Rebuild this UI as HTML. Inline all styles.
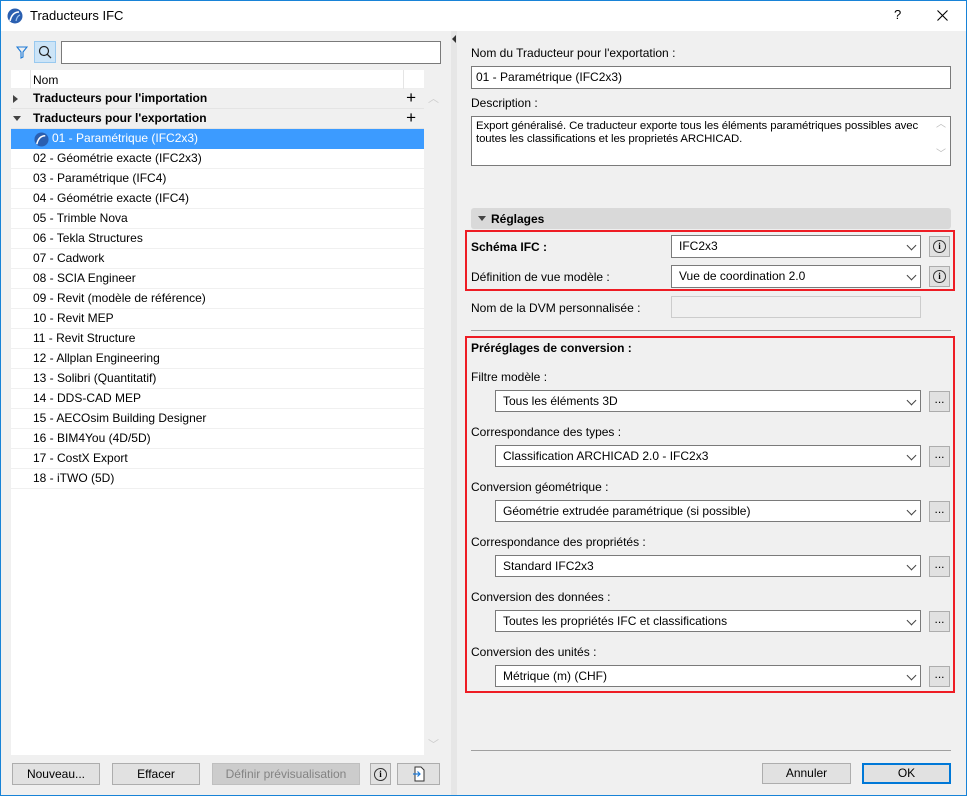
<!DOCTYPE html>
<html><head><meta charset="utf-8"><style>
*{box-sizing:border-box;margin:0;padding:0}
body{width:967px;height:796px;background:#f0f0f0;font-family:"Liberation Sans",sans-serif;font-size:12px;color:#000;position:relative;overflow:hidden}
.a{position:absolute}
.win{left:0;top:0;width:967px;height:796px;border:1px solid #1883d7}
.tb{left:1px;top:1px;width:965px;height:30px;background:#fff}
.row{position:absolute;left:11px;width:413px;height:20px;background:#fff;border-bottom:1px solid #f0f0f0;line-height:19px;padding-left:22px;white-space:nowrap}
.grp{background:#f0f0f0;font-weight:bold;border-bottom:1px solid #e4e4e4}
.inp{position:absolute;background:#fff;border:1px solid #7a7a7a;height:22px;line-height:20px;padding-left:6px;white-space:nowrap}
.dd{position:absolute;background:#fff;border:1px solid #7a7a7a;height:22px;line-height:20px;padding-left:7px;white-space:nowrap}
.dd::after{content:"";position:absolute;right:5px;top:6px;width:6px;height:6px;border-right:1px solid #444;border-bottom:1px solid #444;transform:rotate(45deg)}
.btn{position:absolute;background:#e1e1e1;border:1px solid #adadad;height:22px;line-height:20px;text-align:center}
.lbl{position:absolute;white-space:nowrap;line-height:14px}
.red{position:absolute;border:2px solid #ee1c24}
.info{width:13px;height:13px;border:1.3px solid #333;border-radius:50%;position:absolute;left:3px;top:3px;font:bold 9px "Liberation Serif",serif;text-align:center;line-height:11px}
</style></head><body>
<div class="a win"></div>
<div class="a tb"></div>
<svg class="a" style="left:7px;top:8px" width="16" height="16" viewBox="0 0 16 16"><circle cx="8" cy="8" r="7.5" fill="#2a5fb0"/><path d="M3 13 Q5 4 12 4" stroke="#fff" stroke-width="1.6" fill="none"/><path d="M9 13 Q10 8 13 7" stroke="#9cc3ee" stroke-width="1.2" fill="none"/></svg>
<div class="lbl" style="left:30px;top:9px;font-size:13px">Traducteurs IFC</div>
<div class="lbl" style="left:894px;top:8px;font-size:13px">?</div>
<svg class="a" style="left:937px;top:10px" width="11" height="11" viewBox="0 0 11 11"><path d="M0.5 0.5L10.5 10.5M10.5 0.5L0.5 10.5" stroke="#000" stroke-width="1.1"/></svg>

<!-- left pane -->
<svg class="a" style="left:16px;top:46px" width="12" height="13" viewBox="0 0 12 13"><path d="M1 1H11L7 6V11L5 12V6Z" fill="none" stroke="#1e7ad6" stroke-width="1.1"/></svg>
<div class="a" style="left:34px;top:41px;width:22px;height:22px;background:#cce4f7;border:1px solid #99c9ef"></div>
<svg class="a" style="left:38px;top:45px" width="14" height="14" viewBox="0 0 14 14"><circle cx="6" cy="6" r="4.5" fill="none" stroke="#222" stroke-width="1.2"/><path d="M9.3 9.3L13 13" stroke="#222" stroke-width="1.3"/></svg>
<div class="inp" style="left:61px;top:41px;width:380px;height:23px"></div>

<div class="a" style="left:11px;top:70px;width:413px;height:685px;background:#fff"></div>
<div class="a" style="left:11px;top:70px;width:413px;height:19px;background:#fff;border-bottom:1px solid #eee"></div>
<div class="a" style="left:30px;top:70px;width:1px;height:19px;background:#e5e5e5"></div>
<div class="a" style="left:403px;top:70px;width:1px;height:19px;background:#e5e5e5"></div>
<div class="lbl" style="left:33px;top:73px">Nom</div>
<div class="row grp" style="top:89px">Traducteurs pour l'importation<span class="a" style="right:8px;top:-1px;font-weight:normal;font-size:17px">+</span></div>
<div class="row grp" style="top:109px">Traducteurs pour l'exportation<span class="a" style="right:8px;top:-1px;font-weight:normal;font-size:17px">+</span></div>
<div class="a" style="left:13px;top:95px;width:0;height:0;border-left:5px solid #444;border-top:4px solid transparent;border-bottom:4px solid transparent"></div>
<div class="a" style="left:13px;top:116px;width:0;height:0;border-top:5px solid #444;border-left:4px solid transparent;border-right:4px solid transparent"></div>
<div class="row" style="top:129px;background:#3c9bff;color:#fff;padding-left:41px;border:none">01 - Paramétrique (IFC2x3)</div>
<svg class="a" style="left:34px;top:132px" width="15" height="15" viewBox="0 0 16 16"><circle cx="8" cy="8" r="7.5" fill="#2a5fb0"/><path d="M3 13 Q5 4 12 4" stroke="#fff" stroke-width="1.6" fill="none"/></svg>
<div class="row" style="top:149px">02 - Géométrie exacte (IFC2x3)</div>
<div class="row" style="top:169px">03 - Paramétrique (IFC4)</div>
<div class="row" style="top:189px">04 - Géométrie exacte (IFC4)</div>
<div class="row" style="top:209px">05 - Trimble Nova</div>
<div class="row" style="top:229px">06 - Tekla Structures</div>
<div class="row" style="top:249px">07 - Cadwork</div>
<div class="row" style="top:269px">08 - SCIA Engineer</div>
<div class="row" style="top:289px">09 - Revit (modèle de référence)</div>
<div class="row" style="top:309px">10 - Revit MEP</div>
<div class="row" style="top:329px">11 - Revit Structure</div>
<div class="row" style="top:349px">12 - Allplan Engineering</div>
<div class="row" style="top:369px">13 - Solibri (Quantitatif)</div>
<div class="row" style="top:389px">14 - DDS-CAD MEP</div>
<div class="row" style="top:409px">15 - AECOsim Building Designer</div>
<div class="row" style="top:429px">16 - BIM4You (4D/5D)</div>
<div class="row" style="top:449px">17 - CostX Export</div>
<div class="row" style="top:469px">18 - iTWO (5D)</div>
<div class="lbl" style="left:428px;top:92px;color:#ccc;font-size:11px">︿</div>
<div class="lbl" style="left:428px;top:738px;color:#ccc;font-size:11px">﹀</div>

<div class="btn" style="left:12px;top:763px;width:88px">Nouveau...</div>
<div class="btn" style="left:112px;top:763px;width:88px">Effacer</div>
<div class="btn" style="left:212px;top:763px;width:148px;background:#ccc;border-color:#bfbfbf;color:#838383">Définir prévisualisation</div>
<div class="btn" style="left:370px;top:763px;width:21px"><div class="info" style="left:3px;top:4px">i</div></div>
<div class="btn" style="left:397px;top:763px;width:43px"><svg width="14" height="16" viewBox="0 0 14 16" style="margin-top:2px"><path d="M3 1H9L12 4V15H3Z" fill="#fff" stroke="#333"/><path d="M1 8H8M5.5 5.5L8 8L5.5 10.5" stroke="#1e7ad6" fill="none" stroke-width="1.2"/></svg></div>

<!-- splitter -->
<div class="a" style="left:451px;top:31px;width:6px;height:764px;background:#e6e6e6"></div>
<div class="a" style="left:452px;top:35px;width:0;height:0;border-right:4px solid #333;border-top:4px solid transparent;border-bottom:4px solid transparent"></div>

<!-- right pane -->
<div class="lbl" style="left:471px;top:46px">Nom du Traducteur pour l'exportation :</div>
<div class="inp" style="left:471px;top:66px;width:480px;height:23px;padding-left:4px">01 - Paramétrique (IFC2x3)</div>
<div class="lbl" style="left:471px;top:96px">Description :</div>
<div class="inp" style="left:471px;top:116px;width:480px;height:50px;line-height:13px;padding:3px 16px 0 4px;white-space:normal;font-size:11.4px;letter-spacing:-0.1px">Export généralisé. Ce traducteur exporte tous les éléments paramétriques possibles avec toutes les classifications et les proprietés ARCHICAD.</div>
<div class="lbl" style="left:936px;top:118px;color:#bbb;font-size:10px">︿</div>
<div class="lbl" style="left:936px;top:148px;color:#bbb;font-size:10px">﹀</div>

<div class="a" style="left:471px;top:208px;width:480px;height:21px;background:#d9d9d9;border-radius:3px"></div>
<div class="a" style="left:478px;top:216px;width:0;height:0;border-top:5px solid #444;border-left:4px solid transparent;border-right:4px solid transparent"></div>
<div class="lbl" style="left:491px;top:212px;font-weight:bold">Réglages</div>

<div class="red" style="left:465px;top:230px;width:490px;height:61px"></div>
<div class="lbl" style="left:471px;top:240px;font-weight:bold">Schéma IFC :</div>
<div class="dd" style="left:671px;top:235px;width:250px;height:23px">IFC2x3</div>
<div class="btn" style="left:929px;top:236px;width:21px;height:21px"><div class="info">i</div></div>
<div class="lbl" style="left:471px;top:270px">Définition de vue modèle :</div>
<div class="dd" style="left:671px;top:265px;width:250px;height:23px">Vue de coordination 2.0</div>
<div class="btn" style="left:929px;top:266px;width:21px;height:21px"><div class="info">i</div></div>
<div class="lbl" style="left:471px;top:301px">Nom de la DVM personnalisée :</div>
<div class="a" style="left:671px;top:296px;width:250px;height:22px;border:1px solid #ccc;background:#f0f0f0"></div>
<div class="a" style="left:471px;top:330px;width:480px;height:1px;background:#a0a0a0"></div>

<div class="red" style="left:465px;top:336px;width:490px;height:357px"></div>
<div class="lbl" style="left:471px;top:341px;font-weight:bold">Préréglages de conversion :</div>

<div class="lbl" style="left:471px;top:370px">Filtre modèle :</div>
<div class="dd" style="left:495px;top:390px;width:426px">Tous les éléments 3D</div>
<div class="btn" style="left:929px;top:391px;width:21px;height:21px;line-height:14px">...</div>

<div class="lbl" style="left:471px;top:425px">Correspondance des types :</div>
<div class="dd" style="left:495px;top:445px;width:426px">Classification ARCHICAD 2.0 - IFC2x3</div>
<div class="btn" style="left:929px;top:446px;width:21px;height:21px;line-height:14px">...</div>

<div class="lbl" style="left:471px;top:480px">Conversion géométrique :</div>
<div class="dd" style="left:495px;top:500px;width:426px">Géométrie extrudée paramétrique (si possible)</div>
<div class="btn" style="left:929px;top:501px;width:21px;height:21px;line-height:14px">...</div>

<div class="lbl" style="left:471px;top:535px">Correspondance des propriétés :</div>
<div class="dd" style="left:495px;top:555px;width:426px">Standard IFC2x3</div>
<div class="btn" style="left:929px;top:556px;width:21px;height:21px;line-height:14px">...</div>

<div class="lbl" style="left:471px;top:590px">Conversion des données :</div>
<div class="dd" style="left:495px;top:610px;width:426px">Toutes les propriétés IFC et classifications</div>
<div class="btn" style="left:929px;top:611px;width:21px;height:21px;line-height:14px">...</div>

<div class="lbl" style="left:471px;top:645px">Conversion des unités :</div>
<div class="dd" style="left:495px;top:665px;width:426px">Métrique (m) (CHF)</div>
<div class="btn" style="left:929px;top:666px;width:21px;height:21px;line-height:14px">...</div>

<div class="a" style="left:471px;top:750px;width:480px;height:1px;background:#a0a0a0"></div>
<div class="btn" style="left:762px;top:763px;width:89px;height:21px;line-height:19px">Annuler</div>
<div class="btn" style="left:862px;top:763px;width:89px;height:21px;line-height:17px;border:2px solid #0078d7">OK</div>
</body></html>
